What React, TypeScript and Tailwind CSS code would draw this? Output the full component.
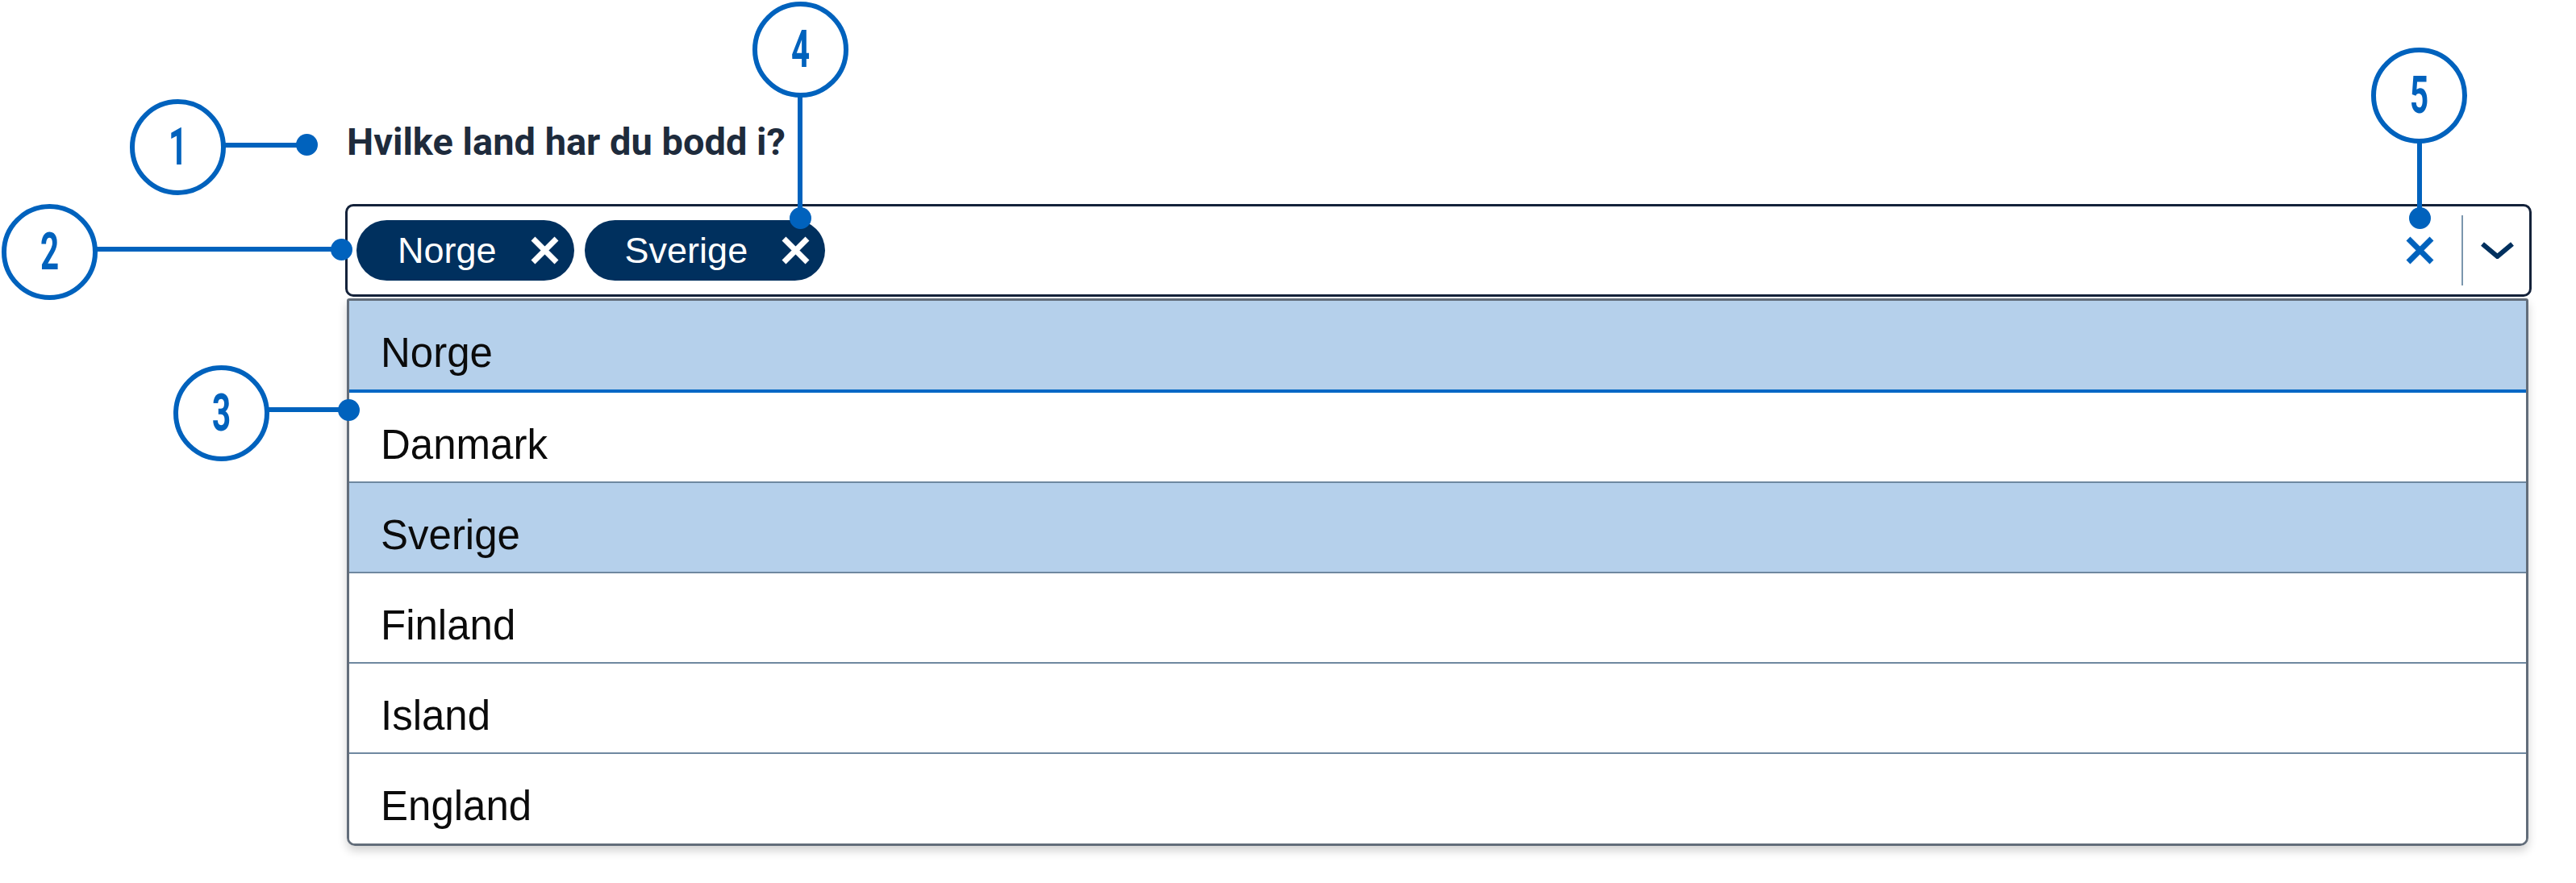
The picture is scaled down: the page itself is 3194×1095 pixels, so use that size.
import React from "react";

const options = [
  { label: "Norge", selected: true },
  { label: "Danmark", selected: false },
  { label: "Sverige", selected: true },
  { label: "Finland", selected: false },
  { label: "Island", selected: false },
  { label: "England", selected: false },
];

function XIcon({ className, width = 7 }: { className?: string; width?: number }) {
  return (
    <svg viewBox="0 0 37 37" className={className} fill="none">
      <path d="M4 4 L33 33 M33 4 L4 33" stroke="currentColor" strokeWidth={width} />
    </svg>
  );
}

function Chip({ label, padLeft }: { label: string; padLeft: string }) {
  return (
    <div
      className={`flex h-[75px] items-center gap-[41px] rounded-full bg-[#00305E] pr-[18px] text-[45px] text-white ${padLeft}`}
    >
      <span className="leading-none">{label}</span>
      <XIcon className="h-[37px] w-[37px] text-white" />
    </div>
  );
}

// numbered callout circle, laid over the form
function Circle({ n, left, top }: { n: string; left: string; top: string }) {
  return (
    <div
      className={`absolute ${left} ${top} flex h-[119px] w-[119px] items-center justify-center rounded-full border-[6px] border-[#0062BD] bg-white`}
    >
      <span
        className="scale-x-[0.62] text-[65px] font-bold leading-none text-[#0062BD]"
        style={{ fontFamily: "Roboto, sans-serif" }}
      >
        {n}
      </span>
    </div>
  );
}

function Dot({ className }: { className: string }) {
  return <div className={`absolute h-[27px] w-[27px] rounded-full bg-[#0062BD] ${className}`} />;
}

export default function App() {
  return (
    <div
      className="relative h-[1095px] w-[3194px] overflow-hidden bg-white"
      style={{ fontFamily: '"Liberation Sans", Arial, sans-serif' }}
    >
      <div className="flex flex-col pl-[428px] pr-[55px] pt-[145px]">
        <div className="flex h-[60px] items-center pl-[2px]">
          <span
            className="text-[47px] font-bold leading-none text-[#1e2b3c]"
            style={{ fontFamily: "Roboto, sans-serif" }}
          >
            Hvilke land har du bodd i?
          </span>
        </div>

        <div className="mt-[48px] flex h-[115px] items-center rounded-[10px] border-[3px] border-[#14223a] pl-[11px] pr-[19px]">
          <div className="flex flex-1 items-center gap-[13px]">
            <Chip label="Norge" padLeft="pl-[51px]" />
            <Chip label="Sverige" padLeft="pl-[50px]" />
          </div>
          <XIcon className="h-[37px] w-[37px] text-[#0062BD]" width={7} />
          <div className="ml-[33px] h-[87px] w-[2px] bg-[#7b96ad]" />
          <svg viewBox="0 0 41 21" className="ml-[22px] h-[21px] w-[41px]" fill="none">
            <path d="M2 2.5 L20.5 18 L39 2.5" stroke="#00305E" strokeWidth={6} />
          </svg>
        </div>

        <div className="ml-[2px] mr-[4px] mt-[2px] overflow-hidden rounded-b-[10px] rounded-t-[3px] border-[3px] border-[#626d7a] shadow-[0_6px_12px_rgba(0,0,0,0.18)]">
          {options.map((o, i) => (
            <div
              key={o.label}
              className={clsx(
                "flex items-center pl-[39px] pt-[18px] text-[51px] leading-none text-[#0b0b0b]",
                o.selected ? "bg-[#b5d0eb]" : "bg-white",
                i === 0 && "h-[114px] border-b-4 border-[#0067C5]",
                i > 0 && i < options.length - 1 && "h-[112px] border-b-2 border-[#6f88a0]",
                i === options.length - 1 && "h-[111px]"
              )}
            >
              {o.label}
            </div>
          ))}
        </div>
      </div>

      {/* callouts */}
      <Circle n="1" left="left-[161px]" top="top-[123px]" />
      <div className="absolute left-[278px] top-[177px] h-[6px] w-[102px] bg-[#0062BD]" />
      <Dot className="left-[367px] top-[166px]" />

      <Circle n="2" left="left-[2px]" top="top-[253px]" />
      <div className="absolute left-[119px] top-[306px] h-[6px] w-[304px] bg-[#0062BD]" />
      <Dot className="left-[410px] top-[296px]" />

      <Circle n="3" left="left-[215px]" top="top-[453px]" />
      <div className="absolute left-[332px] top-[505px] h-[6px] w-[100px] bg-[#0062BD]" />
      <Dot className="left-[419px] top-[495px]" />

      <Circle n="4" left="left-[933px]" top="top-[2px]" />
      <div className="absolute left-[989px] top-[119px] h-[151px] w-[6px] bg-[#0062BD]" />
      <Dot className="left-[979px] top-[257px]" />

      <Circle n="5" left="left-[2940px]" top="top-[59px]" />
      <div className="absolute left-[2997px] top-[176px] h-[94px] w-[6px] bg-[#0062BD]" />
      <Dot className="left-[2987px] top-[257px]" />
    </div>
  );
}

function clsx(...parts: (string | false | undefined)[]) {
  return parts.filter(Boolean).join(" ");
}
